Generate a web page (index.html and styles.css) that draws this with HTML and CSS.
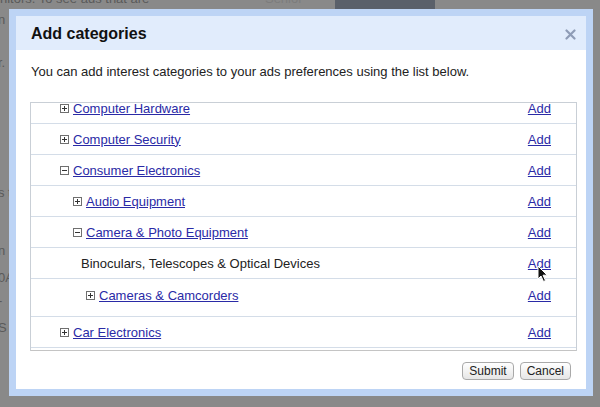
FILE: index.html
```html
<!DOCTYPE html>
<html lang="en">
<head>
    <meta charset="UTF-8">
    <title>Add categories</title>
    <link rel="stylesheet" href="styles.css">
</head>
<body>
    <div class="page">
        <div class="page-top">nitors. To see ads that are <span class="page-tab">Senior</span><span class="page-btn"></span></div>
        <div class="page-line l1">n</div>
        <div class="page-line l2">r.</div>
        <div class="page-line l3">s t</div>
        <div class="page-line l4">n</div>
        <div class="page-line l5">0A</div>
        <div class="page-line l6">-</div>
        <div class="page-line l7">S</div>
    </div>

    <div class="dialog">
        <div class="dialog-title">
            <span>Add categories</span>
            <svg class="close" width="11" height="11" viewBox="0 0 11 11">
                <path d="M1.5 1.5 L9.5 9.5 M9.5 1.5 L1.5 9.5" stroke="#8e9cb6" stroke-width="2.2" stroke-linecap="round"/>
            </svg>
        </div>
        <div class="dialog-body">
            <p class="intro">You can add interest categories to your ads preferences using the list below.</p>
            <div class="cat-list">
                <div class="cat-scroll">
                    <div class="row lvl1">
                        <span class="cat"><svg class="exp" width="9" height="9" viewBox="0 0 9 9"><rect x="0.5" y="0.5" width="8" height="8" fill="#fff" stroke="#6f6f6f"/><path d="M2 4.5h5M4.5 2v5" stroke="#333"/></svg><a href="#">Computer Hardware</a></span>
                        <a href="#">Add</a>
                    </div>
                    <div class="row lvl1">
                        <span class="cat"><svg class="exp" width="9" height="9" viewBox="0 0 9 9"><rect x="0.5" y="0.5" width="8" height="8" fill="#fff" stroke="#6f6f6f"/><path d="M2 4.5h5M4.5 2v5" stroke="#333"/></svg><a href="#">Computer Security</a></span>
                        <a href="#">Add</a>
                    </div>
                    <div class="row lvl1">
                        <span class="cat"><svg class="exp" width="9" height="9" viewBox="0 0 9 9"><rect x="0.5" y="0.5" width="8" height="8" fill="#fff" stroke="#6f6f6f"/><path d="M2 4.5h5" stroke="#333"/></svg><a href="#">Consumer Electronics</a></span>
                        <a href="#">Add</a>
                    </div>
                    <div class="row lvl2">
                        <span class="cat"><svg class="exp" width="9" height="9" viewBox="0 0 9 9"><rect x="0.5" y="0.5" width="8" height="8" fill="#fff" stroke="#6f6f6f"/><path d="M2 4.5h5M4.5 2v5" stroke="#333"/></svg><a href="#">Audio Equipment</a></span>
                        <a href="#">Add</a>
                    </div>
                    <div class="row lvl2">
                        <span class="cat"><svg class="exp" width="9" height="9" viewBox="0 0 9 9"><rect x="0.5" y="0.5" width="8" height="8" fill="#fff" stroke="#6f6f6f"/><path d="M2 4.5h5" stroke="#333"/></svg><a href="#">Camera &amp; Photo Equipment</a></span>
                        <a href="#">Add</a>
                    </div>
                    <div class="row leaf3">
                        <span class="cat leaf">Binoculars, Telescopes &amp; Optical Devices</span>
                        <a href="#">Add</a>
                    </div>
                    <div class="row lvl3 tall">
                        <span class="cat"><svg class="exp" width="9" height="9" viewBox="0 0 9 9"><rect x="0.5" y="0.5" width="8" height="8" fill="#fff" stroke="#6f6f6f"/><path d="M2 4.5h5M4.5 2v5" stroke="#333"/></svg><a href="#">Cameras &amp; Camcorders</a></span>
                        <a href="#">Add</a>
                    </div>
                    <div class="row lvl1">
                        <span class="cat"><svg class="exp" width="9" height="9" viewBox="0 0 9 9"><rect x="0.5" y="0.5" width="8" height="8" fill="#fff" stroke="#6f6f6f"/><path d="M2 4.5h5M4.5 2v5" stroke="#333"/></svg><a href="#">Car Electronics</a></span>
                        <a href="#">Add</a>
                    </div>
                    <div class="row"></div>
                </div>
            </div>
            <div class="actions">
                <button class="btn">Submit</button>
                <button class="btn">Cancel</button>
            </div>
        </div>
    </div>

    <svg class="pointer" width="12" height="18" viewBox="0 0 12 18">
        <path d="M1 1 L1 14 L4 11 L6.5 16.5 L8.5 15.5 L6 10.2 L10.2 10.2 Z" fill="#111" stroke="#fff" stroke-width="1" stroke-linejoin="round"/>
    </svg>
</body>
</html>
```

FILE: styles.css
```css
body {
    margin: 0;
    font-family: "Liberation Sans", Arial, sans-serif;
    background-color: #898989;
    overflow: hidden;
    height: 407px;
    position: relative;
}
.page {
    color: #5a5a5a;
    font-size: 13px;
}
.page-top {
    margin-top: -9px;
    line-height: 16px;
    white-space: nowrap;
}
.page-tab {
    margin-left: 112px;
    color: #7c7c7c;
}
.page-btn {
    display: inline-block;
    width: 100px;
    height: 20px;
    margin-left: 32px;
    vertical-align: -8px;
    background: #5a606a;
}
.page-line {
    line-height: 16px;
    margin-left: -2px;
}
.l1 { margin-top: 1px; }
.l2 { margin-top: 27px; }
.l3 { margin-top: 114px; }
.l4 { margin-top: 42px; }
.l5 { margin-top: 11px; }
.l6 { margin-top: 7px; }
.l7 { margin-top: 11px; }

.dialog {
    position: absolute;
    left: 9px;
    top: 9px;
    width: 570px;
    border: 7px solid #bdd4f5;
    background: #fff;
    color: #222;
}
.dialog-title {
    display: flex;
    justify-content: space-between;
    align-items: center;
    height: 34px;
    padding: 2px 10px 0 15px;
    box-sizing: border-box;
    background: #e1ecfc;
    font-size: 16px;
    font-weight: bold;
    color: #111;
}
.close {
    margin-top: 0;
}
.dialog-body {
    padding: 0 9px 9px 14px;
}
.intro {
    margin: 14px 0 22px 1px;
    font-size: 13px;
    line-height: 16px;
}
.cat-list {
    height: 247px;
    overflow: hidden;
    border: 1px solid #c9cfd6;
    border-bottom-color: #c4c4c4;
}
.cat-scroll {
    margin-top: -10px;
}
.row {
    display: flex;
    justify-content: space-between;
    align-items: center;
    height: 30px;
    padding-right: 25px;
    border-bottom: 1px solid #d4dde8;
    font-size: 13px;
}
.row a {
    color: #2a2aa6;
}
.lvl1 { padding-left: 29px; }
.lvl2 { padding-left: 42px; }
.lvl3 { padding-left: 55px; }
.leaf3 { padding-left: 50px; }
.tall {
    height: 38px;
    align-items: flex-start;
    padding-top: 9px;
    box-sizing: border-box;
}
.cat {
    display: flex;
    align-items: center;
}
.leaf {
    color: #222;
}
.exp {
    margin-right: 4px;
}
.actions {
    display: flex;
    justify-content: flex-end;
    gap: 6px;
    margin-top: 11px;
    padding-right: 6px;
}
.btn {
    height: 18px;
    padding: 0 6px;
    min-width: 50px;
    border: 1px solid #a9a9a9;
    border-radius: 4px;
    background: linear-gradient(#ffffff, #e6e6e6);
    font-family: "Liberation Sans", Arial, sans-serif;
    font-size: 12px;
    color: #222;
    line-height: 16px;
}
.pointer {
    position: absolute;
    left: 537px;
    top: 265px;
}
```
